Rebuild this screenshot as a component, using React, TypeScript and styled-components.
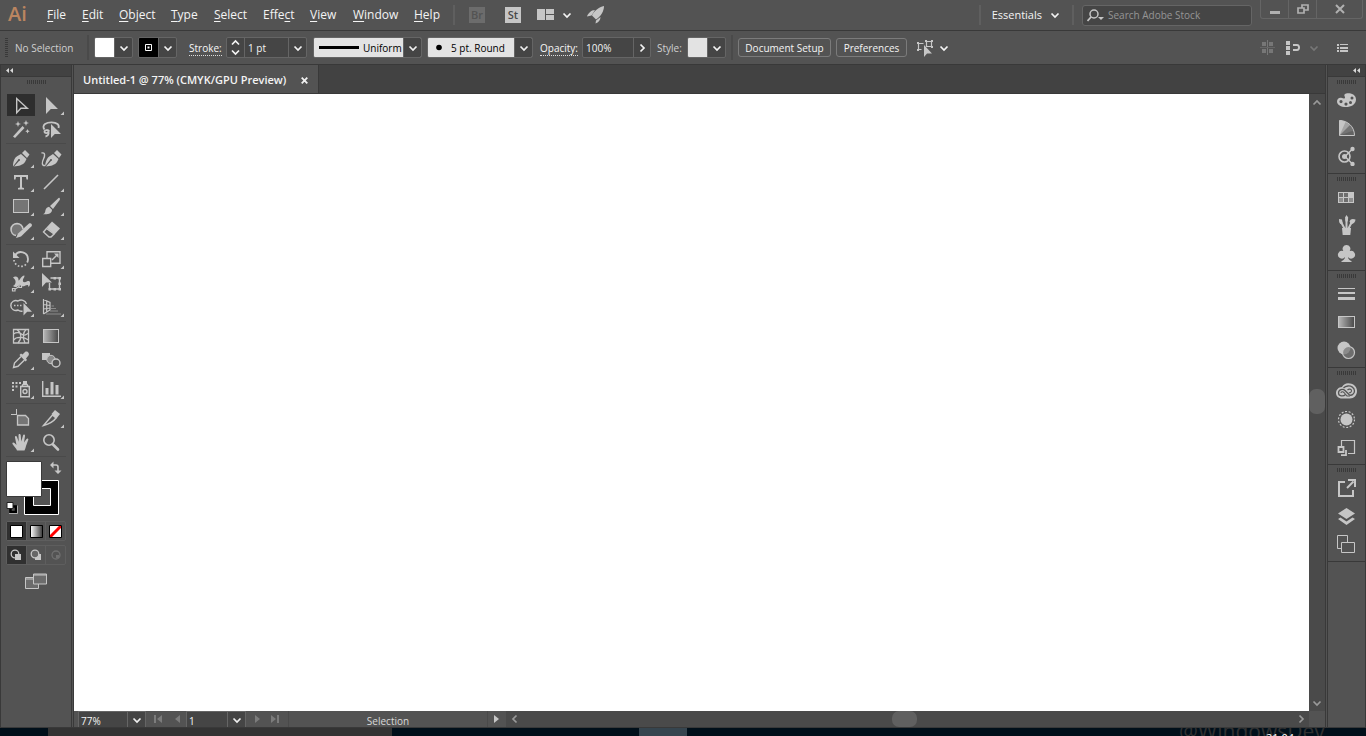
import React from 'react';
import styled, { createGlobalStyle } from 'styled-components';

const c = {
  panel: '#535353',
  dark: '#424242',
  field: '#454545',
  scroll: '#4a4a4a',
  line: '#393939',
  edge: '#656565',
  icon: '#c6c6c6',
  light: '#e3e3e3',
};

const GlobalStyle = createGlobalStyle`
  *, *::before, *::after { box-sizing: border-box; }
  body {
    margin: 0;
    background: ${c.panel};
    color: #f4f4f4;
    font: 10px/16px "Open Sans", "Noto Sans", sans-serif;
  }
  button, input, select { font: inherit; color: inherit; margin: 0; padding: 0; border: 0; background: none; border-radius: 0; }
  svg { display: block; flex: none; }
  ul { list-style: none; margin: 0; padding: 0; }
`;

const Shell = styled.div`
  display: flex;
  flex-direction: column;
  height: 100vh;
  overflow: hidden;
`;

/* ---------- menu bar ---------- */

const MenuBar = styled.header`
  display: flex;
  align-items: center;
  flex: none;
  height: 31px;
  padding-left: 8px;
  border-bottom: 1px solid ${c.line};
`;

const Logo = styled.div`
  width: 31px;
  color: #bb8560;
  font: 600 20px/28px "Open Sans", sans-serif;
  padding-bottom: 2px;
`;

const MenuList = styled.ul`
  display: flex;
`;

const MenuItem = styled.li<{ $w: number }>`
  width: ${(p) => p.$w}px;
`;

const MenuButton = styled.button`
  display: block;
  padding: 0 8px;
  font-size: 12px;
  line-height: 28px;
  white-space: nowrap;
  u { text-underline-offset: 2px; }
`;

const Divider = styled.span<{ $h?: number; $m?: string; $c?: string }>`
  flex: none;
  width: 2px;
  height: ${(p) => p.$h ?? 20}px;
  margin: ${(p) => p.$m ?? '0'};
  background: ${(p) => p.$c ?? '#5f5f5f'};
`;

const AppBadge = styled.button<{ $dim?: boolean; $mr: number }>`
  width: 16px;
  height: 16px;
  margin-right: ${(p) => p.$mr}px;
  background: ${(p) => (p.$dim ? '#6c6c6c' : c.icon)};
  color: ${(p) => (p.$dim ? '#535353' : '#4a4a4a')};
  font-size: 11px;
  font-weight: 600;
  line-height: 16px;
  text-align: center;
`;

const IconButton = styled.button<{ $mr?: number; $gap?: number }>`
  display: flex;
  align-items: center;
  gap: ${(p) => p.$gap ?? 8}px;
  flex: none;
  margin-right: ${(p) => p.$mr ?? 0}px;
`;

const Spacer = styled.span`
  flex: 1;
`;

const Workspace = styled(IconButton)`
  font-size: 11px;
  line-height: 28px;
`;

const SearchBox = styled.label`
  display: flex;
  align-items: center;
  gap: 4px;
  width: 170px;
  height: 21px;
  margin: 0 8px;
  padding: 0 4px;
  border: 1px solid ${c.edge};
  border-radius: 3px;
  background: ${c.field};
  input { width: 130px; outline: 0; }
  input::placeholder { color: #959595; opacity: 1; }
`;

const WindowButtons = styled.div`
  display: flex;
  align-self: flex-start;
  height: 19px;
  margin-right: 3px;
  border: 1px solid ${c.edge};
  border-top: 0;
  border-radius: 0 0 3px 3px;
`;

const WindowButton = styled.button<{ $w: number }>`
  display: grid;
  place-items: center;
  width: ${(p) => p.$w}px;
  color: #b0b0b0;
  & + & { border-left: 1px solid ${c.edge}; }
`;

/* ---------- control bar ---------- */

const ControlBar = styled.div`
  display: flex;
  align-items: center;
  flex: none;
  height: 34px;
  padding-left: 5px;
  border-bottom: 1px solid ${c.line};
  white-space: nowrap;
`;

const VGrip = styled.span`
  width: 3px;
  height: 19px;
  background: repeating-linear-gradient(${c.line} 0 1px, transparent 1px 2px);
`;

const Label = styled.span<{ $w: number; $dim?: boolean; $bold?: boolean; $ml?: number }>`
  flex: none;
  width: ${(p) => p.$w}px;
  margin-left: ${(p) => p.$ml ?? 0}px;
  color: ${(p) => (p.$dim ? '#d0d0d0' : '#f8f8f8')};
  font-weight: ${(p) => (p.$bold ? 500 : 400)};
  span { border-bottom: 1px dotted #ddd; line-height: 14px; display: inline-block; }
`;

const Combo = styled.div<{ $w: number; $mr?: number }>`
  position: relative;
  display: flex;
  flex: none;
  width: ${(p) => p.$w}px;
  height: 21px;
  margin-right: ${(p) => p.$mr ?? 0}px;
  border: 1px solid ${c.edge};
  border-radius: 2px;
  background: ${c.field};
  overflow: hidden;
`;

const Swatch = styled.button<{ $bg: string }>`
  display: grid;
  place-items: center;
  width: 19px;
  background: ${(p) => p.$bg};
`;

const Drop = styled.button`
  display: grid;
  place-items: center;
  flex: 1;
  border-left: 1px solid ${c.edge};
`;

const DropMark = styled.span`
  position: absolute;
  top: 0;
  right: 0;
  bottom: 0;
  display: grid;
  place-items: center;
  width: 18px;
  border-left: 1px solid ${c.edge};
  background: ${c.field};
  color: #f0f0f0;
  pointer-events: none;
`;

const Field = styled.input<{ $w: number }>`
  width: ${(p) => p.$w}px;
  padding: 0 3px;
  border-left: 1px solid ${c.edge};
  outline: 0;
  &:first-child { border-left: 0; }
`;

const Sample = styled.span<{ $w: number }>`
  display: grid;
  place-items: center;
  width: ${(p) => p.$w}px;
  background: ${c.light};
`;

const LightSelect = styled.select`
  flex: 1;
  appearance: none;
  outline: 0;
  background: ${c.light};
  color: #000;
`;

const BarButton = styled.button<{ $w: number }>`
  width: ${(p) => p.$w}px;
  height: 19px;
  margin-right: 5px;
  border: 1px solid #7b7b7b;
  border-radius: 3px;
  font-weight: 500;
  line-height: 16px;
`;

/* ---------- body ---------- */

const Body = styled.main`
  display: flex;
  flex: 1;
  gap: 1px;
  min-height: 0;
  border-bottom: 1px solid ${c.line};
`;

const ToolPanel = styled.nav`
  flex: none;
  width: 72px;
  border: solid ${c.line};
  border-width: 0 1px;
`;

const PanelHead = styled.button<{ $right?: boolean }>`
  display: flex;
  align-items: center;
  justify-content: ${(p) => (p.$right ? 'flex-end' : 'flex-start')};
  width: 100%;
  height: 12px;
  padding: 0 5px;
  border-bottom: 1px solid ${c.line};
  background: ${c.dark};
  color: #d8d8d8;
`;

const Grip = styled.div`
  width: 19px;
  height: 4px;
  margin: 3px auto;
  background: repeating-linear-gradient(90deg, ${c.line} 0 1px, transparent 1px 2px);
`;

const ToolGroups = styled.div`
  padding: 4px 5px 0;
`;

const ToolGroup = styled.div`
  display: grid;
  grid-template-columns: 30px 30px;
  padding: 2px 0;
  border-bottom: 1px solid #4a4a4a;
`;

const Tool = styled.button<{ $on?: boolean }>`
  height: 24px;
  background: linear-gradient(#2e2e2e, #2e2e2e) center / ${(p) => (p.$on ? '28px 22px' : '0 0')} no-repeat;
`;

const PaintArea = styled.button`
  display: block;
  margin: 3px 0 5px;
`;

const Segments = styled.div`
  display: flex;
  width: 60px;
  height: 20px;
  margin-bottom: 4px;
  border: 1px solid #5e5e5e;
  border-radius: 2px;
`;

const Segment = styled.button<{ $on?: boolean }>`
  display: grid;
  place-items: center;
  flex: 1;
  background: ${(p) => (p.$on ? '#303030' : 'transparent')};
  & + & { border-left: 1px solid #5e5e5e; }
`;

const ScreenMode = styled.button`
  display: block;
  margin: 8px 0 0 19px;
`;

const Doc = styled.section`
  display: flex;
  flex-direction: column;
  flex: 1;
  min-width: 0;
  border: solid ${c.line};
  border-width: 0 1px;
`;

const TabStrip = styled.div`
  display: flex;
  flex: none;
  height: 29px;
  border-bottom: 1px solid ${c.line};
  background: ${c.dark};
`;

const Tab = styled.div`
  display: flex;
  align-items: center;
  justify-content: space-between;
  width: 245px;
  padding: 2px 10px 0 9px;
  border-right: 1px solid ${c.line};
  background: ${c.panel};
  font-size: 11px;
  font-weight: 600;
  white-space: nowrap;
`;

const CanvasRow = styled.div`
  display: flex;
  flex: 1;
  min-height: 0;
`;

const Canvas = styled.div`
  flex: 1;
  background: #fff;
`;

const ScrollTrack = styled.div<{ $vertical?: boolean }>`
  display: flex;
  flex: ${(p) => (p.$vertical ? '0 0 16px' : '1')};
  flex-direction: ${(p) => (p.$vertical ? 'column' : 'row')};
  align-items: stretch;
  background: ${c.scroll};
  color: #9a9a9a;
`;

const ScrollArrow = styled.button`
  display: grid;
  place-items: center;
  flex: 0 0 17px;
`;

const ScrollGap = styled.span<{ $grow: number }>`
  flex: ${(p) => p.$grow} 0 0;
`;

const Thumb = styled.button`
  flex: 0 0 25px;
  border-radius: 7px;
  background: #606060;
`;

const StatusBar = styled.footer`
  display: flex;
  flex: none;
  height: 16px;
  padding-left: 4px;
`;

const StatusCombo = styled.label<{ $w: number }>`
  position: relative;
  display: flex;
  flex: none;
  width: ${(p) => p.$w}px;
  border: 1px solid ${c.edge};
  border-bottom: 0;
  background: ${c.field};
  select { flex: 1; padding: 3px 2px 0; appearance: none; outline: 0; line-height: 12px; }
`;

const NavButton = styled.button<{ $w: number }>`
  display: grid;
  place-items: center;
  width: ${(p) => p.$w}px;
  color: #7c7c7c;
`;

const StatusText = styled.output`
  width: 200px;
  margin-left: 6px;
  padding-top: 2px;
  border: solid #4a4a4a;
  border-width: 0 1px;
  color: #d8d8d8;
  text-align: center;
`;

const Dock = styled.aside`
  flex: none;
  width: 39px;
  border: solid ${c.line};
  border-width: 0 1px;
`;

const DockGroup = styled.div`
  padding-bottom: 3px;
  border-bottom: 1px solid ${c.line};
  ${Grip} { margin-bottom: 2px; }
  padding-top: 1px;
  margin-top: -1px;
`;

const DockButton = styled.button`
  display: grid;
  place-items: center;
  width: 100%;
  height: 28px;
`;

const Taskbar = styled.div`
  display: flex;
  flex: none;
  height: 8px;
  overflow: hidden;
  background: #000f1a;
`;

const TaskItem = styled.span<{ $w: number; $bg: string }>`
  width: ${(p) => p.$w}px;
  background: ${(p) => p.$bg};
`;

const Watermark = styled.div`
  position: relative;
  width: 187px;
  margin-top: -13px;
  color: #313131;
  font: 21px/32px "Open Sans", sans-serif;
  white-space: nowrap;
`;

const Clock = styled.time`
  position: absolute;
  left: 87px;
  top: 15px;
  color: #fff;
  font-size: 11px;
  line-height: 16px;
`;

/* ---------- drawings ---------- */

const Chevron = ({ dir = 'down', color = 'currentColor' }: { dir?: 'down' | 'up' | 'left' | 'right'; color?: string }) => {
  const d = {
    down: 'M1.500 3.500L5 7l3.500-3.500',
    up: 'M1.500 6.500L5 3l3.500 3.500',
    left: 'M6.500 1.500L3 5l3.500 3.500',
    right: 'M3.500 1.500L7 5 3.500 8.500',
  }[dir];
  return (
    <svg width="10" height="10" viewBox="0 0 10 10" fill="none" stroke={color} strokeWidth="1.700">
      <path d={d} />
    </svg>
  );
};

const DoubleArrow = () => (
  <svg width="7" height="5" viewBox="0 0 7 5" fill="currentColor">
    <path d="M3 0v5L0 2.500zM7 0v5L4 2.500z" />
  </svg>
);

const S = c.icon;
const line = { fill: 'none', stroke: S, strokeWidth: 1.4 };

type ToolDef = { name: string; more?: boolean; art: React.ReactNode };

const toolGroups: ToolDef[][] = [
  [
    { name: 'Selection', art: <path {...line} d="M10.700 5.500v14.300l4.200-4.600h6.400z" /> },
    { name: 'Direct Selection', more: true, art: <path fill={S} d="M10 4v17l4.800-5H22z" /> },
    {
      name: 'Magic Wand',
      art: (
        <g fill={S}>
          <path d="M7 19.500L16.500 9l2 2L9 21z" />
          <path d="M12 4l.8 2.200L15 7l-2.200.8L12 10l-.8-2.200L9 7l2.200-.8zM20 3l.8 2.200L23 6l-2.200.8L20 9l-.8-2.200L17 6l2.200-.8zM21.500 12l.7 1.500 1.500.7-1.500.7-.7 1.500-.7-1.500-1.500-.7 1.500-.7z" />
        </g>
      ),
    },
    {
      name: 'Lasso',
      art: (
        <g>
          <path {...line} strokeWidth={1.800} d="M8.500 12.500C7 11 7 8.500 9 7c3.500-2.300 10-2 12.500 0 1.500 1.200 1.500 2.500 1 4M13 14.500c0-2-4.500-2-4.500.2 0 1.800 3.500 1.800 3.500-.2M12.500 15c.5 2-.5 4-3 4.500" />
          <path fill={S} d="M15 7v14l3.800-4H25z" />
        </g>
      ),
    },
  ],
  [
    {
      name: 'Pen',
      more: true,
      art: (
        <g>
          <path fill={S} d="M7 20.500c0-5 1.500-9 4.500-10.500L15 8l5.500 5-1.500 3c-2 3-6 4-11 4.500l5-5.500a1 1 0 1 0-1-1z" />
          <path fill={S} d="M16 7l3-3 4.500 4.500L21 12z" />
        </g>
      ),
    },
    {
      name: 'Curvature',
      more: false,
      art: (
        <g>
          <path {...line} d="M5.500 7c4-1 3.500 3 2 6s-2 7 1.500 6.500" />
          <path fill={S} d="M9 20.500c.5-5 2-9 5-10.500l3-2 5.500 5-1.500 3c-2 3-6 4-11 4.500l5-5.500a1 1 0 1 0-1-1z" />
          <path fill={S} d="M18 7l3-3 4.500 4.500-2.500 3.500z" />
        </g>
      ),
    },
    { name: 'Type', more: true, art: <path fill={S} d="M8 5h14v4.500h-1.500L20 7h-4v10.500l2 .5v1.500h-6V18l2-.5V7h-4l-.5 2.500H8z" /> },
    { name: 'Line Segment', more: true, art: <path {...line} strokeWidth={1.600} d="M8 19L22 5" /> },
    { name: 'Rectangle', more: true, art: <rect x="7.500" y="5.500" width="15" height="13" fill="#757575" stroke={S} /> },
    {
      name: 'Paintbrush',
      more: true,
      art: (
        <g fill={S}>
          <path d="M23.500 4c.7.700.5 1.500 0 2.200L17 15l-3-3 8-7.500c.5-.5 1-.9 1.500-.5z" />
          <path d="M13 12.800l3 3c.2 3.500-4 5-9 4.400 2.300-.8 2-2.200 2.500-4.200.5-1.800 2-2.800 3.500-3.200z" />
        </g>
      ),
    },
    {
      name: 'Shaper',
      more: true,
      art: (
        <g>
          <path d="M10 17.500A6 6 0 1 1 17 11" fill="#757575" stroke={S} strokeWidth="1.600" />
          <path fill={S} d="M10 20l2-4.500L23 5.500c1.500-1 4 1 2.500 2.800L15 18.500z" />
        </g>
      ),
    },
    {
      name: 'Eraser',
      more: true,
      art: (
        <g>
          <path fill={S} d="M16 3.500l8 7-5.500 6-8-7z" />
          <path {...line} d="M10.500 10.500L7.500 14l5.500 5h2l3-3z" />
        </g>
      ),
    },
  ],
  [
    {
      name: 'Rotate',
      more: true,
      art: (
        <g>
          <path {...line} strokeWidth={1.800} d="M9 8.500a7 7 0 0 1 13 3.500c0 1.500-.3 2.500-.8 3.500" />
          <path fill={S} d="M7 4.500v6.500h6.500z" />
          <path {...line} strokeWidth={1.700} strokeDasharray="1.600 1.900" d="M8 13a7 7 0 0 0 13 3" />
        </g>
      ),
    },
    {
      name: 'Scale',
      more: true,
      art: (
        <g>
          <path {...line} d="M11 11V4.700h13v11.600h-9" />
          <path {...line} d="M6.700 11.500h8v8h-8z" />
          <path {...line} d="M16 13l5-5" />
          <path fill={S} d="M18 6.500h4.500V11z" />
        </g>
      ),
    },
    {
      name: 'Width',
      more: true,
      art: (
        <g>
          <path
            fill={S}
            d="M7 6.500c2.500-2 6-.5 5.500 3 2-.5 2-4.500 6-5 0 2-1 2.500-1.500 4-.5 2 .5 3.500 2.500 2.500s4-2 4.500.5c.3 2-.5 3.500-1.500 4.500 0-2.500-1.500-2.500-3-1.500-2.500 1.500-5.500 1-6-1-1.500 2.500-4.500 3.500-6.500 1.500 1.500-.5 3-2.500 2.500-5C9.200 8.500 8 7.500 7 6.500z"
          />
          <path {...line} strokeWidth={1.200} d="M7.500 19L19 12" />
          <path {...line} strokeWidth={1.200} fill={c.panel} d="M6.500 17.500h2.500V20H6.500zM13 14h2.500v2.500H13z" />
        </g>
      ),
    },
    {
      name: 'Free Transform',
      art: (
        <g>
          <path {...line} d="M14.500 7H23.500v11h-10V12" />
          <path fill={S} d="M12.500 17h2.500v2.500h-2.500zM22.500 17H25v2.500h-2.500zM22.500 6H25v2.500h-2.500zM17.500 17H20v2.500h-2.500zM22.500 11.500H25V14h-2.500zM17.500 6H20v2.500h-2.500z" />
          <path fill={S} d="M6 2v14l4-4.500h6z" />
        </g>
      ),
    },
    {
      name: 'Shape Builder',
      more: true,
      art: (
        <g>
          <path {...line} d="M20.500 9A5.500 5.500 0 0 0 12 6a5 5 0 1 0 0 9c1.200 1 3 1.500 4.500 1" />
          <path {...line} strokeDasharray="1.500 1.500" d="M8 10.500h9" />
          <path fill={S} d="M17.500 8v12.500l3.700-3.700H26z" />
        </g>
      ),
    },
    {
      name: 'Perspective Grid',
      more: true,
      art: (
        <g>
          <path {...line} strokeWidth={1.200} d="M7.500 4v15M7.500 4.500l6.500 3v7.500l-6.500 4M10.700 6v11M7.500 9.500l6.500 1M7.500 14l6.500-1" />
          <path {...line} strokeWidth={1.200} stroke="#8c8c8c" d="M15.500 11h2.500M15 13.500h5M14 16h8M10 19h15" />
        </g>
      ),
    },
  ],
  [
    {
      name: 'Mesh',
      art: (
        <g {...line} strokeWidth={1.300}>
          <path d="M7.500 5.500h15v13.500h-15z" />
          <path d="M11 5.500c5 4 5 9 1 13.500M20 5.500c-4 4-3 9-1 13.500M7.500 10c3-2 5-2 8 0s4 1 7-1M7.500 16c3-4 11-3 15 0" />
        </g>
      ),
    },
    { name: 'Gradient', art: <rect x="7.500" y="5.500" width="15" height="13" fill="url(#shade)" stroke={S} /> },
    {
      name: 'Eyedropper',
      more: true,
      art: (
        <g>
          <path {...line} d="M15 8.500L8.500 15l-1 4.500 4.500-1.200 6.500-6.300" />
          <path fill={S} d="M13.500 7l1.500-1.500 1.500 1L19 4c2-1.500 5 1 3.500 3.500L20 10.500l1 1.500-1.500 1.500z" />
        </g>
      ),
    },
    {
      name: 'Blend',
      art: (
        <g>
          <path fill={S} d="M6 5h8v7H6z" />
          <circle cx="15" cy="11.500" r="4.200" fill="#8a8a8a" stroke={S} />
          <circle cx="20" cy="15" r="4" fill={c.panel} stroke={S} strokeWidth="1.400" />
        </g>
      ),
    },
  ],
  [
    {
      name: 'Symbol Sprayer',
      more: true,
      art: (
        <g>
          <path fill={S} d="M6 5h2v2H6zM9.500 5h2v2h-2zM13 5h2v2h-2zM6 8.500h2v2H6zM9.500 8.500h2v2h-2zM6 12h2v2H6zM17 4h4v3h-4z" />
          <path {...line} d="M14.700 9.500h8.600v10.300h-8.600z" />
          <path {...line} d="M16 9l1-1.500h4L22 9" />
          <circle cx="19" cy="14.500" r="2" {...line} />
        </g>
      ),
    },
    { name: 'Column Graph', more: true, art: <path fill={S} d="M6 4h1.400v14.600H25V20H6zM9.500 11h3v6.500h-3zM14.500 5h3v12.500h-3zM19.500 8h3v9.500h-3z" /> },
  ],
  [
    {
      name: 'Artboard',
      art: (
        <g>
          <path {...line} strokeWidth={1} d="M10.500 3v5M5 8.500h6" />
          <path d="M11.500 9.500h8l3 3v6.500h-11z" fill="#757575" stroke={S} strokeWidth="1.300" />
        </g>
      ),
    },
    {
      name: 'Slice',
      more: true,
      art: (
        <g>
          <path {...line} d="M7.500 19.500L16.500 9l3.500 3c-2.500 3.500-7 6-12.500 7.500z" />
          <path fill={S} d="M15.500 8L19 4l5 4-3.500 4.500z" />
        </g>
      ),
    },
    {
      name: 'Hand',
      more: true,
      art: (
        <path
          fill={S}
          d="M11 20.500c-.5-2-3-4-4.500-6.500-.5-1.500 1-2 2-1l2 2L9 7.500c-.3-1.500 1.500-2 2-.5l1.700 4.800L12.500 5c0-1.500 2-1.500 2.200 0l.6 6.500L17 5.500c.4-1.500 2.200-1 2 .5l-1 6.500L20.500 9c.8-1.200 2.200-.4 1.800.8L20 16c-.3 2-1 3-1.500 4.500z"
        />
      ),
    },
    {
      name: 'Zoom',
      art: (
        <g>
          <circle cx="13" cy="10" r="5.200" fill="none" stroke={S} strokeWidth="1.600" />
          <path stroke={S} strokeWidth="2.600" strokeLinecap="round" d="M17 14.500l5 5" />
        </g>
      ),
    },
  ],
];

const dockGroups: { name: string; art: React.ReactNode }[][] = [
  [
    {
      name: 'Color',
      art: (
        <path
          fill={S}
          fillRule="evenodd"
          d="M9 7.500c0-1.500-1.500-2 0-3.500 2-1.500 11-1 11 5.500 0 5-5 7.500-10 7.500S1 15 1 11.500 4 7 6 8c1.500.7 3 .7 3-.5zM5 10a1.600 1.600 0 1 0 0 3.200A1.600 1.600 0 0 0 5 10zm5 2.500a1.600 1.600 0 1 0 0 3.200 1.600 1.600 0 0 0 0-3.200zm4.500-1.500a1.500 1.500 0 1 0 0 3 1.500 1.500 0 0 0 0-3zM16 6.500a1.500 1.500 0 1 0 0 3 1.500 1.500 0 0 0 0-3z"
        />
      ),
    },
    {
      name: 'Color Guide',
      art: (
        <g>
          <path d="M3.500 2.500c8 0 15 6 15 15h-15z" fill="#747474" />
          <path fill="#a4a4a4" d="M3.500 17.500V2.500c4 0 8 2 10.500 4.500z" />
          <path fill={S} d="M3.500 17.500V2.500c2.500 0 4.500.5 6 1.500z" />
          <path fill="#626262" d="M3.500 17.500l14-5c.7 1.500 1 3 1 5z" />
          <path fill="none" stroke={S} d="M3.500 2.500c8 0 15 6 15 15h-15z" />
        </g>
      ),
    },
    {
      name: 'Color Themes',
      art: (
        <g>
          <circle cx="8.500" cy="10.500" r="5.500" {...line} strokeWidth={1.600} />
          <circle cx="8.500" cy="10.500" r="2.500" fill={S} />
          <path {...line} d="M9 10.500l7.500-7.500M9 10.500l7.500 7.500" />
          <circle cx="16.500" cy="3" r="2.200" fill={S} />
          <circle cx="16.500" cy="18" r="2.200" fill={S} />
        </g>
      ),
    },
  ],
  [
    {
      name: 'Swatches',
      art: (
        <g>
          <path fill={S} d="M2 5h16v11H2z" />
          <path fill="#6e6e6e" d="M3 6h4v4H3zM8 6h4v4H8zM8 11h4v4H8z" />
          <path fill="#8e8e8e" d="M3 11h4v4H3zM13 11h4v4h-4z" />
        </g>
      ),
    },
    {
      name: 'Brushes',
      art: (
        <g>
          <path fill={S} d="M6 13h9l-.7 7H6.700z" />
          <path {...line} strokeWidth={2} d="M8.500 13.500L5 7M10.500 13V4M12.500 13.500l3.500-7" />
          <path fill={S} d="M3 4l3 .5.800 4L4.500 9C3 8 3 6 3 4zM10.500 0l1.700 2.500-.5 4H9.500L9 2.500zM13.500 6.500c1-3 3.500-3 6-2 0 2.500-2 4.500-4.500 5z" />
        </g>
      ),
    },
    {
      name: 'Symbols',
      art: (
        <path fill={S} d="M10.500 2a3.800 3.800 0 0 1 3.200 6A3.900 3.900 0 1 1 12 14c.2 2 1.500 3.500 3.500 4v1h-10v-1c2-.5 3.300-2 3.500-4a3.900 3.900 0 1 1-1.700-6 3.800 3.800 0 0 1 3.200-6z" />
      ),
    },
  ],
  [
    { name: 'Stroke', art: <path fill={S} d="M2 4h17v1H2zM2 8h17v2H2zM2 13h17v3H2z" /> },
    { name: 'Gradient Panel', art: <rect x="2.500" y="4.500" width="16" height="11" fill="url(#shade)" stroke={S} /> },
    {
      name: 'Transparency',
      art: (
        <g>
          <circle cx="8" cy="8" r="6.500" fill={S} />
          <circle cx="12.500" cy="12.500" r="6" fill="#777" fillOpacity=".75" stroke={S} strokeWidth="1.200" />
        </g>
      ),
    },
  ],
  [
    {
      name: 'Libraries',
      art: (
        <g fill="none">
          <path fill={S} d="M6 6a7.500 7.500 0 0 1 8-3.500c4 .5 7 3.500 7 7.500 0 4.500-3 7.500-7 7.500H6C2.500 17.500 0 15 0 12s2.500-6 6-6z" />
          <path stroke="#555" strokeWidth="1.300" d="M9.500 13.500c-2 2-7 2-7-1.500 0-3.800 4.500-4.500 6.500-2.500l4 4c2 1.800 5.500-.2 5.500-3.500S15 4.700 12 5 7.500 7 7.500 7" />
          <path stroke="#555" strokeWidth="1.100" d="M5 12c0-1.500 2-1.500 3-.5l3 3.500h3M11.500 9c1.500-1.500 4-1 4 .8S13.800 12 13 11.500" />
        </g>
      ),
    },
    {
      name: 'Appearance',
      art: (
        <g>
          <circle cx="10.500" cy="10.500" r="6" fill={S} />
          <circle cx="10.500" cy="10.500" r="8" fill="none" stroke={S} strokeWidth="1.200" strokeDasharray="2 1.600" />
        </g>
      ),
    },
    {
      name: 'Graphic Styles',
      art: (
        <g {...line} strokeWidth={1.200}>
          <path d="M5.500 9V3.500h13v13H12" />
          <path strokeWidth="1.800" d="M2.500 10h5v5h-5zM10 13v5.200H5" />
        </g>
      ),
    },
  ],
  [
    {
      name: 'Asset Export',
      art: (
        <g>
          <path {...line} strokeWidth={2} d="M9 4H3v14h14v-6" />
          <path {...line} strokeWidth={2} d="M11 10l6.500-6.500" />
          <path fill={S} d="M12 1h8v8h-2V3h-6z" />
        </g>
      ),
    },
    { name: 'Layers', art: <path fill={S} d="M10.500 2L19 7.500 10.500 13 2 7.500zM4.500 11.500l6 4 6-4L19 13l-8.500 6L2 13z" /> },
    {
      name: 'Artboards',
      art: (
        <g {...line} strokeWidth={1}>
          <path d="M5 14.500H1.500v-13h10V8" />
          <path d="M5.500 8.500h13v10h-13z" />
        </g>
      ),
    },
  ],
];

const menus: [string, string, string, number][] = [
  ['', 'F', 'ile', 35],
  ['', 'E', 'dit', 37],
  ['', 'O', 'bject', 52],
  ['', 'T', 'ype', 43],
  ['', 'S', 'elect', 49],
  ['Effe', 'c', 't', 47],
  ['', 'V', 'iew', 43],
  ['', 'W', 'indow', 61],
  ['', 'H', 'elp', 47],
];

export default function App() {
  return (
    <Shell>
      <GlobalStyle />
      <svg width="0" height="0" style={{ position: 'absolute' }} aria-hidden="true">
        <defs>
          <linearGradient id="shade">
            <stop offset="0" stopColor="#b8b8b8" />
            <stop offset="1" stopColor="#484848" />
          </linearGradient>
          <linearGradient id="whiteBlack">
            <stop offset="0" stopColor="#fff" />
            <stop offset="1" stopColor="#3a3a3a" />
          </linearGradient>
        </defs>
      </svg>

      <MenuBar>
        <Logo>Ai</Logo>
        <MenuList>
          {menus.map(([pre, key, post, w]) => (
            <MenuItem key={pre + key + post} $w={w}>
              <MenuButton>
                {pre}
                <u>{key}</u>
                {post}
              </MenuButton>
            </MenuItem>
          ))}
        </MenuList>
        <Divider $m="0 14px 0 0" />
        <AppBadge $dim $mr={20}>Br</AppBadge>
        <AppBadge $mr={16}>St</AppBadge>
        <IconButton aria-label="Arrange documents" $mr={15}>
          <svg width="17" height="14" viewBox="0 0 17 14" fill={S}>
            <path d="M0 1h8v11H0zM9 1h8v5H9zM9 7h8v5H9z" />
          </svg>
          <Chevron />
        </IconButton>
        <IconButton aria-label="GPU performance">
          <svg width="18" height="18" viewBox="0 0 18 18" fill={S}>
            <path d="M17 0c0 5-3 10.500-8 13.500l-4-4C7 5 12 1 17 0zM8 4L4.500 9.500 0 10.500C1 7.500 4 4 8 4zM13.500 11c0 3-2 5.500-5 6.500l.5-3z" />
          </svg>
        </IconButton>
        <Spacer />
        <Divider $m="0 11px 0 0" />
        <Workspace>
          Essentials
          <Chevron />
        </Workspace>
        <Divider $m="0 0 0 12px" />
        <SearchBox aria-label="Search Adobe Stock">
          <svg width="17" height="13" viewBox="0 0 17 13">
            <circle cx="7" cy="5" r="4" fill="none" stroke={S} strokeWidth="1.500" />
            <path d="M4 8L.5 12" stroke={S} strokeWidth="1.800" />
            <path d="M11 8h6l-3 3z" fill={S} />
          </svg>
          <input type="text" placeholder="Search Adobe Stock" />
        </SearchBox>
        <WindowButtons>
          <WindowButton $w={27} aria-label="Minimize">
            <svg width="10" height="12" viewBox="0 0 10 12">
              <path fill="currentColor" d="M0 8h10v3H0z" />
            </svg>
          </WindowButton>
          <WindowButton $w={28} aria-label="Restore">
            <svg width="12" height="10" viewBox="0 0 12 10" fill="none" stroke="currentColor" strokeWidth="1.700">
              <path d="M1 4h6v5H1zM5 4V1h6v5H7" />
            </svg>
          </WindowButton>
          <WindowButton $w={46} aria-label="Close window">
            <svg width="10" height="10" viewBox="0 0 10 10" stroke="currentColor" strokeWidth="2">
              <path d="M1 1l8 8M9 1L1 9" />
            </svg>
          </WindowButton>
        </WindowButtons>
      </MenuBar>

      <ControlBar>
        <VGrip />
        <Label $w={72} $ml={7} $dim>No Selection</Label>
        <Divider $h={25} $m="0 5px 0 0" $c="#4a4a4a" />
        <Combo $w={39} $mr={5}>
          <Swatch $bg="#fff" aria-label="Fill" />
          <Drop aria-label="Fill options"><Chevron /></Drop>
        </Combo>
        <Combo $w={39} $mr={12}>
          <Swatch $bg="#000" aria-label="Stroke color">
            <svg width="7" height="7" viewBox="0 0 7 7">
              <path d="M.5.500h6v6h-6z" fill="none" stroke="#fff" />
              <path d="M2.500 2.500h2v2h-2z" fill="#fff" />
            </svg>
          </Swatch>
          <Drop aria-label="Stroke color options"><Chevron /></Drop>
        </Combo>
        <Label as="label" htmlFor="stroke" $w={37} $bold><span>Stroke:</span></Label>
        <Combo $w={81} $mr={6}>
          <IconButton aria-label="Step stroke weight">
            <svg width="17" height="19" viewBox="0 0 17 19" fill="none" stroke="currentColor" strokeWidth="1.700">
              <path d="M5 6.500L8.500 3 12 6.500M5 12.500L8.500 16l3.500-3.500" />
            </svg>
          </IconButton>
          <Field id="stroke" $w={44} defaultValue="1 pt" />
          <Drop aria-label="Stroke weights"><Chevron /></Drop>
        </Combo>
        <Combo $w={109} $mr={5}>
          <Sample $w={49}>
            <svg width="40" height="3"><path d="M0 0h40v3H0z" /></svg>
          </Sample>
          <LightSelect aria-label="Width profile">
            <option>Uniform</option>
          </LightSelect>
          <DropMark><Chevron /></DropMark>
        </Combo>
        <Combo $w={106} $mr={7}>
          <Sample $w={23}>
            <svg width="7" height="7"><circle cx="3" cy="3.500" r="2.800" /></svg>
          </Sample>
          <LightSelect aria-label="Brush definition">
            <option>5 pt. Round</option>
          </LightSelect>
          <DropMark><Chevron /></DropMark>
        </Combo>
        <Label as="label" htmlFor="opacity" $w={42} $bold><span>Opacity:</span></Label>
        <Combo $w={69} $mr={6}>
          <Field id="opacity" $w={50} defaultValue="100%" />
          <Drop aria-label="Opacity slider"><Chevron dir="right" /></Drop>
        </Combo>
        <Label $w={30} $dim>Style:</Label>
        <Combo $w={39} $mr={5}>
          <Swatch $bg={c.light} aria-label="Style" />
          <Drop aria-label="Graphic styles"><Chevron /></Drop>
        </Combo>
        <Divider $h={25} $m="0 5px 0 0" $c="#4a4a4a" />
        <BarButton $w={93}>Document Setup</BarButton>
        <BarButton $w={71}>Preferences</BarButton>
        <IconButton aria-label="Select similar" $mr={20} $gap={0}>
          <svg width="27" height="18" viewBox="0 0 27 18">
            <path {...line} strokeWidth={1.200} d="M6.500 4.500h5M6.500 4.500v6h3M14.500 2.500h5v5h-5z" />
            <path fill={S} d="M5 3h2v2H5zM5 10h2v2H5zM13 1h2v2h-2zM19 1h2v2h-2zM19 7h2v2h-2zM12 6v12l3-3.500h5z" />
          </svg>
          <Chevron />
        </IconButton>
        <Spacer />
        <IconButton aria-label="Align to pixel grid" $mr={11}>
          <svg width="15" height="15" viewBox="0 0 15 15" fill="#777">
            <path d="M2 2h4v4H2zM9 2h4v4H9zM2 9h4v4H2zM9 9h4v4H9zM7 0h1v15H7z" />
            <path fill="#666" d="M0 7h15v1H0z" />
          </svg>
        </IconButton>
        <IconButton aria-label="Snap" $mr={18}>
          <svg width="15" height="14" viewBox="0 0 15 14" fill={S}>
            <path d="M0 0h4v4H0zM0 5h4v4H0zM0 10h4v4H0zM7 3h4c4 0 4 7 0 7H7V8h4c1.500 0 1.500-3 0-3H7z" />
          </svg>
          <Chevron color="#777" />
        </IconButton>
        <IconButton aria-label="Bar menu" $mr={17}>
          <svg width="12" height="8" viewBox="0 0 12 8" fill={S}>
            <path d="M0 0h2v2H0zM3 0h8v1H3zM0 3h2v2H0zM3 3h8v2H3zM0 6h2v2H0zM3 6h8v2H3z" />
          </svg>
        </IconButton>
      </ControlBar>

      <Body>
        <ToolPanel aria-label="Tools">
          <PanelHead aria-label="Collapse tools"><DoubleArrow /></PanelHead>
          <Grip />
          <ToolGroups>
            {toolGroups.map((group) => (
              <ToolGroup key={group[0].name}>
                {group.map((tool) => (
                  <Tool key={tool.name} aria-label={tool.name} $on={tool.name === 'Selection'}>
                    <svg width="30" height="24" viewBox="0 0 30 24">
                      {tool.art}
                      {tool.more && <path fill={S} d="M28 18.500V22h-3.500z" />}
                    </svg>
                  </Tool>
                ))}
              </ToolGroup>
            ))}
            <PaintArea aria-label="Fill and stroke">
              <svg width="60" height="56" viewBox="0 0 60 56">
                <path d="M18.500 20.500h34v34h-34z" fill="#000" stroke="#fff" />
                <path d="M27.500 28.500h17v17h-17z" fill={c.panel} stroke="#fff" />
                <path d="M.5 1.500h35v35H.5z" fill="#fff" stroke="#3a3a3a" />
                <path d="M46 5h4c1.500 0 2 1 2 2v4" fill="none" stroke={S} strokeWidth="1.600" />
                <path d="M44 5l3.500-3.500v7zM52 14l-3.500-3.500h7z" fill={S} />
                <path d="M4.500 46.500h5.500v5.500H4.500z" fill="none" stroke="#000" strokeWidth="2.500" />
                <path d="M3 53.500h8.500V45.500" fill="none" stroke={S} strokeWidth=".8" />
                <path d="M1 42.500h6v6H1z" fill="#fff" stroke="#222" />
              </svg>
            </PaintArea>
            <Segments>
              <Segment $on aria-label="Color fill">
                <svg width="13" height="13"><path d="M.5.500h12v12H.5z" fill="#fff" stroke="#000" /></svg>
              </Segment>
              <Segment aria-label="Gradient fill">
                <svg width="13" height="13"><path d="M.5.500h12v12H.5z" fill="url(#whiteBlack)" stroke="#000" /></svg>
              </Segment>
              <Segment aria-label="No fill">
                <svg width="13" height="13">
                  <path d="M.5.500h12v12H.5z" fill="#fff" />
                  <path d="M1 12L12 1" stroke="#f00" strokeWidth="3" />
                  <path d="M.5.500h12v12H.5z" fill="none" stroke="#000" />
                </svg>
              </Segment>
            </Segments>
            <Segments>
              <Segment $on aria-label="Draw normal">
                <svg width="12" height="12">
                  <circle cx="5" cy="5" r="3.800" fill="none" stroke={S} strokeWidth="1.300" />
                  <path d="M5 5h6v6H5z" fill={S} />
                </svg>
              </Segment>
              <Segment aria-label="Draw behind">
                <svg width="12" height="12">
                  <path d="M5 5h6v6H5z" fill={S} />
                  <circle cx="5" cy="5" r="3.800" fill="#666" stroke={S} strokeWidth="1.300" />
                </svg>
              </Segment>
              <Segment aria-label="Draw inside">
                <svg width="12" height="12">
                  <circle cx="6" cy="6" r="4" fill="none" stroke="#707070" strokeWidth="1.300" />
                  <path d="M6 6h3v3H6z" fill="#707070" />
                </svg>
              </Segment>
            </Segments>
            <ScreenMode aria-label="Screen mode">
              <svg width="23" height="17" viewBox="0 0 23 17" fill="#6c6c6c" stroke={S}>
                <path d="M.5 4.500h13v11H.5z" />
                <path d="M0 6h14" />
                <path d="M8.500 1h13v10h-13z" />
                <path d="M8 2h14" />
              </svg>
            </ScreenMode>
          </ToolGroups>
        </ToolPanel>

        <Doc>
          <TabStrip>
            <Tab>
              Untitled-1 @ 77% (CMYK/GPU Preview)
              <IconButton aria-label="Close document">
                <svg width="7" height="7" viewBox="0 0 7 7" stroke="#f0f0f0" strokeWidth="1.800">
                  <path d="M.7.700l5.600 5.600M6.300.7L.7 6.300" />
                </svg>
              </IconButton>
            </Tab>
          </TabStrip>
          <CanvasRow>
            <Canvas />
            <ScrollTrack $vertical>
              <ScrollArrow aria-label="Scroll up"><Chevron dir="up" /></ScrollArrow>
              <ScrollGap $grow={278} />
              <Thumb aria-label="Vertical scroll position" />
              <ScrollGap $grow={280} />
              <ScrollArrow aria-label="Scroll down"><Chevron /></ScrollArrow>
            </ScrollTrack>
          </CanvasRow>
          <StatusBar>
            <StatusCombo $w={68}>
              <select aria-label="Zoom level"><option>77%</option></select>
              <DropMark><Chevron /></DropMark>
            </StatusCombo>
            <NavButton $w={24} aria-label="First artboard">
              <svg width="9" height="8" fill="currentColor"><path d="M0 0h2v8H0zM8 0v8L3 4z" /></svg>
            </NavButton>
            <NavButton $w={16} aria-label="Previous artboard">
              <svg width="8" height="8" fill="currentColor"><path d="M6 0v8L1 4z" /></svg>
            </NavButton>
            <StatusCombo $w={60}>
              <select aria-label="Artboard"><option>1</option></select>
              <DropMark><Chevron /></DropMark>
            </StatusCombo>
            <NavButton $w={22} aria-label="Next artboard">
              <svg width="8" height="8" fill="currentColor"><path d="M2 0v8l5-4z" /></svg>
            </NavButton>
            <NavButton $w={14} aria-label="Last artboard">
              <svg width="8" height="8" fill="currentColor"><path d="M0 0v8l5-4zM6 0h2v8H6z" /></svg>
            </NavButton>
            <StatusText>Selection</StatusText>
            <NavButton $w={18} aria-label="Status options">
              <svg width="8" height="8" fill={S}><path d="M1 0v8l5-4z" /></svg>
            </NavButton>
            <ScrollTrack>
              <ScrollArrow aria-label="Scroll left"><Chevron dir="left" /></ScrollArrow>
              <ScrollGap $grow={369} />
              <Thumb aria-label="Horizontal scroll position" />
              <ScrollGap $grow={375} />
              <ScrollArrow aria-label="Scroll right"><Chevron dir="right" /></ScrollArrow>
            </ScrollTrack>
            <NavButton as="span" $w={16} />
          </StatusBar>
        </Doc>

        <Dock>
          <PanelHead $right aria-label="Expand panels"><DoubleArrow /></PanelHead>
          {dockGroups.map((group) => (
            <DockGroup key={group[0].name}>
              <Grip />
              {group.map((item) => (
                <DockButton key={item.name} aria-label={item.name}>
                  <svg width="21" height="20" viewBox="0 0 21 20">{item.art}</svg>
                </DockButton>
              ))}
            </DockGroup>
          ))}
        </Dock>
      </Body>

      <Taskbar>
        <TaskItem $w={48} $bg="transparent" />
        <TaskItem $w={344} $bg="#333" />
        <TaskItem $w={247} $bg="transparent" />
        <TaskItem $w={48} $bg="#36454f" />
        <Spacer />
        <Watermark>
          @WindowsDev
          <Clock>21:04</Clock>
        </Watermark>
      </Taskbar>
    </Shell>
  );
}
